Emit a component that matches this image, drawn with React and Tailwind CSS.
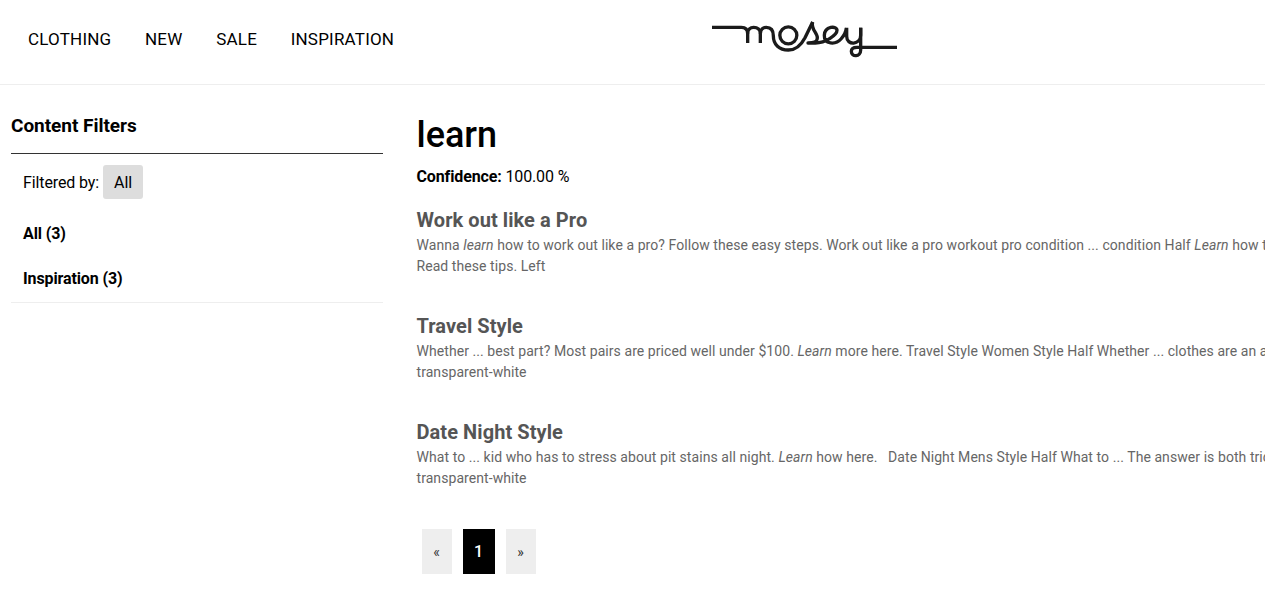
const NAV = ["CLOTHING", "NEW", "SALE", "INSPIRATION"];

const RESULTS = [
  {
    title: "Work out like a Pro",
    lines: [
      <>Wanna <em>learn</em> how to work out like a pro? Follow these easy steps. Work out like a pro workout pro condition ... condition Half <em>Learn</em> how to</>,
      "Read these tips. Left",
    ],
  },
  {
    title: "Travel Style",
    lines: [
      <>Whether ... best part? Most pairs are priced well under $100. <em>Learn</em> more here. Travel Style Women Style Half Whether ... clothes are an a</>,
      "transparent-white",
    ],
  },
  {
    title: "Date Night Style",
    lines: [
      <>What to ... kid who has to stress about pit stains all night. <em>Learn</em> how here. &nbsp; Date Night Mens Style Half What to ... The answer is both tric</>,
      "transparent-white",
    ],
  },
];

function Logo() {
  return (
    <svg className="h-[60px] w-[210px]" viewBox="0 0 630 180" fill="none" stroke="#1b1b1b" strokeWidth="10" strokeLinejoin="round" aria-label="mosey">
      <path d="M36 52H124C136 52 143 59 143 71V99" />
      <path d="M143 71C143 59 151 52 161 52C173 52 181 59 181 71V99" />
      <path d="M181 71C181 59 189 52 199 52C213 52 220 61 220 77C220 104 238 120 265 120C290 120 304 104 315 83L338 36" />
      <path d="M338 36C331 57 353 69 352 84C351 97 341 99 324 99H346C377 99 411 75 411 61C411 46 374 48 373 76C372 104 407 105 423 87C434 75 438 66 439 54" />
      <path d="M440 53V79C440 108 482 105 482 76V53" />
      <path d="M482 53V120C482 142 454 142 454 124C454 115 460 112 471 112H591" />
      <circle cx="265" cy="76" r="25.5" />
    </svg>
  );
}

export default function App() {
  return (
    <div className="h-[607px] w-full overflow-hidden bg-white font-['Roboto',sans-serif] text-base text-black">
      <header className="flex h-[85px] items-start border-b border-[#eeeeee] pl-[28px]">
        <nav className="flex w-[672px] gap-[33.7px] pt-[27px] text-[17px] leading-6 tracking-[0.2px]">
          {NAV.map((n) => <a key={n} href="#">{n}</a>)}
        </nav>
        <div className="pt-[10px]"><Logo /></div>
      </header>
      <div className="flex">
        <aside className="ml-[11px] w-[372px] shrink-0">
          <h2 className="h-[69px] border-b border-[#333333] pt-[28px] text-[19px] leading-[26px] font-bold tracking-[-0.03px]">Content Filters</h2>
          <div className="h-[149px] border-b border-[#eeeeee] pl-3 pt-[11px] leading-6 tracking-[-0.12px]">
            <div className="flex h-[34px] items-center gap-1">
              <span className="pt-px">Filtered by:</span>
              <span className="flex h-[34px] w-10 items-center justify-center rounded-[3px] bg-[#dddddd] pt-px">All</span>
            </div>
            <div className="mt-[23px] font-bold">All (3)</div>
            <div className="mt-[21px] font-bold">Inspiration (3)</div>
          </div>
        </aside>
        <main className="ml-[33.5px] w-[900px] shrink-0 pt-[27px]">
          <h1 className="text-[36px] leading-[46px] font-medium">learn</h1>
          <p className="mt-[7px] leading-6 tracking-[-0.13px]"><b>Confidence:</b> 100.00 %</p>
          <div className="mt-[17px]">
            {RESULTS.map((r) => (
              <article key={r.title} className="h-[106px] text-[#555555]">
                <h3 className="mb-px text-[20px] leading-7 font-bold tracking-[0.07px]">{r.title}</h3>
                {r.lines.map((l, i) => (
                  <p key={i} className="text-sm leading-[21px] tracking-[0.068px] whitespace-nowrap text-[#666666]">{l}</p>
                ))}
              </article>
            ))}
          </div>
          <div className="mt-[5px] ml-[5px] flex gap-[11px]">
            <span className="flex h-[45px] w-[30px] items-center justify-center bg-[#eeeeee] text-sm text-[#333333]">«</span>
            <span className="flex h-[45px] w-8 items-center justify-center bg-black font-medium text-white">1</span>
            <span className="flex h-[45px] w-[30px] items-center justify-center bg-[#eeeeee] text-sm text-[#333333]">»</span>
          </div>
        </main>
      </div>
    </div>
  );
}
